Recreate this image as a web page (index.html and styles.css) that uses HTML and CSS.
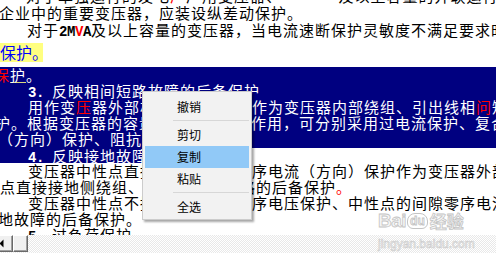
FILE: index.html
```html
<!DOCTYPE html>
<html lang="zh-CN">
<head>
<meta charset="utf-8">
<title>文档</title>
<link rel="stylesheet" href="styles.css">
</head>
<body>
<div class="doc">
  <div class="page">
    <div class="ln top l0">对于单独运行的发电<span class="r">厂</span>厂用变压器、　　　　及以上容量的并联运行</div>
    <div class="ln top l1">企业中的重要变压器，应装设纵差动保护。</div>
    <div class="ln top l2">对于<span class="m">2M<span class="r">V</span>A</span>及以上容量的变压器，当电流速断保护灵敏度不满足要求时</div>
    <div class="ln hl-line"><span class="hl">保护。</span></div>
    <div class="sel">
      <div class="ln i-6"><span class="r">保</span><span class="ul">护</span>。</div>
      <div class="ln i28"><span class="m">3. </span>反映相间短路故障的后备保护</div>
      <div class="ln i28">用作变<span class="r">压</span>器外部相间短路故障和作为变压器内部绕组、引出线相<span class="r">问</span>短路</div>
      <div class="ln i-5">护。根据变压器的容量和在系统中的作用，可分别采用过电流保护、复合电压</div>
      <div class="ln i-2">（方向）保护、阻抗保护。</div>
    </div>
    <div class="ln last"><span class="sel-part"><span class="m">4. </span>反映接地故障的后备保护</span></div>
    <div class="ln i28">变压器中性点直接接地运行时零序电流（方向）保护作为变压器外部接地</div>
    <div class="ln">点直接接地侧绕组、和外部接地短路的后备保护<span class="r">。</span></div>
    <div class="ln i28">变压器中性点不接地运行时，零序电压保护、中性点的间隙零序电流保护</div>
    <div class="ln i-2">地故障的后备保护。</div>
    <div class="ln i28"><span class="m">5. </span>过负荷保护</div>
  </div>
  <div class="hscroll">
    <div class="sb-btn sb-arrow">
      <svg width="6" height="9" viewBox="0 0 6 9"><polygon points="4.5,0.5 4.5,8.5 0.5,4.5" fill="#000"/></svg>
    </div>
    <div class="sb-btn sb-thumb"></div>
    <div class="sb-track"></div>
  </div>

  <div class="wm">
    <div class="wm-top"><span class="wm-bai">Bai</span><span class="wm-du">du</span><span class="wm-jy">经验</span></div>
    <div class="wm-url">jingyan.baidu.com</div>
  </div>

  <div class="menu">
    <div class="mi">撤销</div>
    <div class="sep"></div>
    <div class="mi">剪切</div>
    <div class="mi on">复制</div>
    <div class="mi">粘贴</div>
    <div class="sep"></div>
    <div class="mi">全选</div>
  </div>
</div>
</body>
</html>
```
FILE: styles.css
```css
* { box-sizing: border-box; margin: 0; padding: 0; }
html, body { width: 496px; height: 253px; overflow: hidden; background: #fff; }
body { font-family: "Noto Sans CJK SC", sans-serif; }

.doc {
  position: relative;
  width: 496px;
  height: 253px;
  display: flex;
  flex-direction: column;
}

.page {
  height: 235px;
  flex: none;
  overflow: hidden;
  font-size: 15px;
  letter-spacing: 1px;
  color: #000;
}

.ln {
  white-space: nowrap;
  height: 16px;
  line-height: 16px;
}
.ln.top { height: 17px; line-height: 17px; }
.l0 { margin-top: -13px; text-indent: 26px; }
.l1 { text-indent: -1px; }
.l2 { text-indent: 27px; }

.i28 { text-indent: 28px; }
.i-6 { text-indent: -6px; }
.i-5 { text-indent: -5px; }
.i-2 { text-indent: -2px; }

.r { color: #ff0000; }
.m {
  font-family: "Liberation Mono", monospace;
  font-size: 14px;
  font-weight: bold;
  letter-spacing: -0.4px;
  line-height: 10px;
}

.hl-line { height: 19px; line-height: 19px; margin-top: 5px; }
.hl {
  display: inline-block;
  width: 43px;
  height: 19px;
  background: #ffff80;
  color: #0000ff;
  font-size: 16px;
  letter-spacing: 0;
  vertical-align: top;
}

.sel {
  margin-top: 5px;
  padding-bottom: 1px;
  background: #000080;
  color: #fff;
}
.ul { text-decoration: underline; text-decoration-color: #d8d880; }

.ln.last { height: 15px; line-height: 15px; }
.sel-part {
  display: inline-block;
  height: 15px;
  padding-left: 28px;
  background: #000080;
  color: #fff;
  vertical-align: top;
}

/* horizontal scrollbar */
.hscroll {
  height: 18px;
  flex: none;
  display: flex;
  background-color: #ffffff;
  background-image: repeating-conic-gradient(#ffffff 0 25%, #e8e8e8 0 50%);
  background-size: 2px 2px;
}
.sb-btn {
  flex: none;
  height: 17px;
  background: #f0f0f0;
  border-top: 1px solid #ffffff;
  border-left: 1px solid #ffffff;
  border-right: 1px solid #696969;
  border-bottom: 1px solid #696969;
  box-shadow: inset -1px -1px 0 #a0a0a0;
}
.sb-arrow {
  width: 13px;
  border-left: none;
  display: flex;
  align-items: center;
}
.sb-arrow svg { display: block; margin-left: -1px; }
.sb-thumb { width: 15px; }
.sb-track { flex: 1; }

/* watermark (overlay) */
.wm {
  position: absolute;
  z-index: 1;
  left: 378px;
  top: 211px;
  width: 92px;
  color: #f6f6f6;
  pointer-events: none;
}
.wm-top {
  display: flex;
  align-items: center;
  height: 20px;
  white-space: nowrap;
  -webkit-text-stroke: 0.8px #c4c4c4;
}
.wm-bai { font-family: "Liberation Sans", sans-serif; font-weight: bold; font-size: 19px; letter-spacing: -0.5px; line-height: 20px; }
.wm-du {
  font-family: "Liberation Sans", sans-serif; font-weight: bold; font-size: 12px;
  margin: 0 2px 0 1px; padding: 0 2px;
  border: 1px solid #c4c4c4;
  border-radius: 8px 8px 6px 6px;
  line-height: 14px;
}
.wm-jy { font-size: 17px; font-weight: bold; letter-spacing: 0; line-height: 20px; }
.wm-url {
  margin-top: 6px;
  font-family: "Liberation Sans", sans-serif;
  font-size: 12px;
  line-height: 14px;
  color: #f8f8f8;
  -webkit-text-stroke: 0.6px #cccccc;
  white-space: nowrap;
}

/* context menu (overlay) */
.menu {
  position: absolute;
  z-index: 2;
  left: 142px;
  top: 91px;
  width: 110px;
  padding: 4px 0 1px;
  background: #f2f2f2;
  border: 1px solid #cccccc;
  box-shadow: 2px 2px 2px rgba(0, 0, 0, 0.35);
  font-size: 12px;
  color: #000;
}
.mi {
  height: 22px;
  line-height: 22px;
  margin: 0 2px;
  padding-left: 32px;
  white-space: nowrap;
}
.mi.on { background: #91c9f7; }
.sep {
  height: 1px;
  margin: 2px 2px 3px 30px;
  background: #d7d7d7;
}
```
